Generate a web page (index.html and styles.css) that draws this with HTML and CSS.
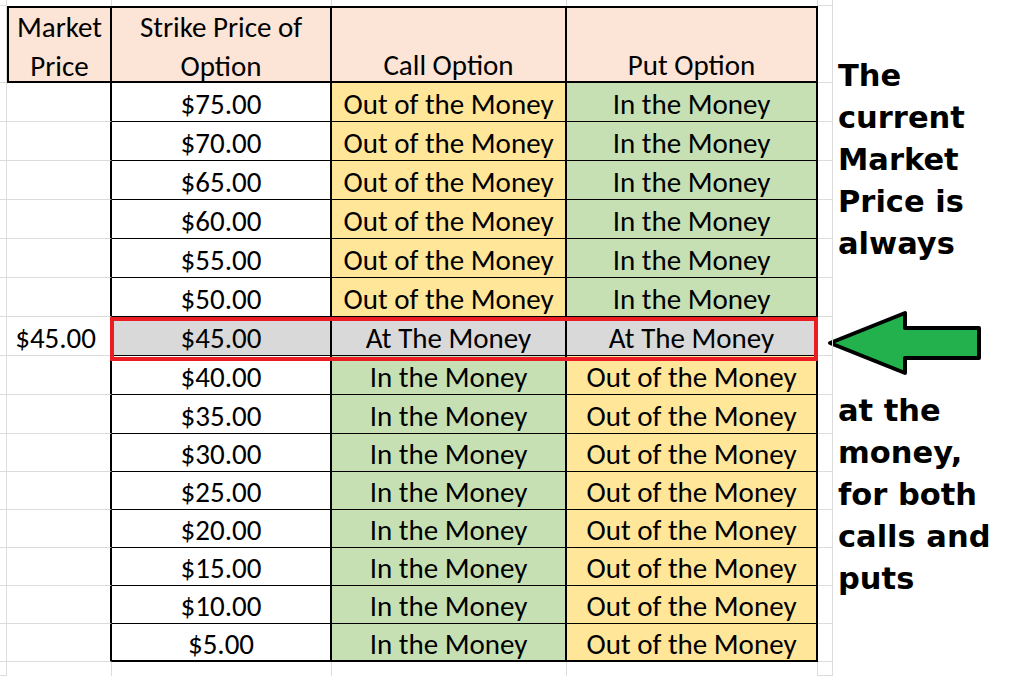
FILE: index.html
```html
<!DOCTYPE html>
<html>
<head>
<meta charset="utf-8">
<link rel="stylesheet" href="styles.css">
</head>
<body>
<div class="page">
  <div class="sheet">
    <div class="c side"></div><div class="c strip"></div><div class="c strip"></div><div class="c strip"></div><div class="c strip"></div><div class="c side"></div>
    <div class="c side"></div>
    <div class="c hd first">Market<br>Price</div>
    <div class="c hd">Strike Price of<br>Option</div>
    <div class="c hd single">Call Option</div>
    <div class="c hd single">Put Option</div>
    <div class="c side"></div>

    <div class="c side"></div><div class="c a"></div><div class="c t">$75.00</div><div class="c t y">Out of the Money</div><div class="c t g">In the Money</div><div class="c side"></div>
    <div class="c side"></div><div class="c a"></div><div class="c t">$70.00</div><div class="c t y">Out of the Money</div><div class="c t g">In the Money</div><div class="c side"></div>
    <div class="c side"></div><div class="c a"></div><div class="c t">$65.00</div><div class="c t y">Out of the Money</div><div class="c t g">In the Money</div><div class="c side"></div>
    <div class="c side"></div><div class="c a"></div><div class="c t">$60.00</div><div class="c t y">Out of the Money</div><div class="c t g">In the Money</div><div class="c side"></div>
    <div class="c side"></div><div class="c a"></div><div class="c t">$55.00</div><div class="c t y">Out of the Money</div><div class="c t g">In the Money</div><div class="c side"></div>
    <div class="c side"></div><div class="c a"></div><div class="c t">$50.00</div><div class="c t y">Out of the Money</div><div class="c t g">In the Money</div><div class="c side"></div>
    <div class="c side"></div><div class="c a mkt">$45.00</div><div class="c t at">$45.00</div><div class="c t at">At The Money</div><div class="c t at">At The Money</div><div class="c side"></div>
    <div class="c side"></div><div class="c a"></div><div class="c t">$40.00</div><div class="c t g">In the Money</div><div class="c t y">Out of the Money</div><div class="c side"></div>
    <div class="c side"></div><div class="c a"></div><div class="c t">$35.00</div><div class="c t g">In the Money</div><div class="c t y">Out of the Money</div><div class="c side"></div>
    <div class="c side"></div><div class="c a"></div><div class="c t">$30.00</div><div class="c t g">In the Money</div><div class="c t y">Out of the Money</div><div class="c side"></div>
    <div class="c side"></div><div class="c a"></div><div class="c t">$25.00</div><div class="c t g">In the Money</div><div class="c t y">Out of the Money</div><div class="c side"></div>
    <div class="c side"></div><div class="c a"></div><div class="c t">$20.00</div><div class="c t g">In the Money</div><div class="c t y">Out of the Money</div><div class="c side"></div>
    <div class="c side"></div><div class="c a"></div><div class="c t">$15.00</div><div class="c t g">In the Money</div><div class="c t y">Out of the Money</div><div class="c side"></div>
    <div class="c side"></div><div class="c a"></div><div class="c t">$10.00</div><div class="c t g">In the Money</div><div class="c t y">Out of the Money</div><div class="c side"></div>
    <div class="c side"></div><div class="c a"></div><div class="c t last">$5.00</div><div class="c t last g">In the Money</div><div class="c t last y">Out of the Money</div><div class="c side"></div>
    <div class="c side"></div><div class="c strip"></div><div class="c strip"></div><div class="c strip"></div><div class="c strip"></div><div class="c side"></div>

    <div class="highlight"></div>
  </div>

  <div class="notes">
    <p class="note">The<br>current<br>Market<br>Price is<br>always</p>
    <svg class="arrow" width="158" height="70" viewBox="0 0 158 70">
      <polygon points="4,34 79,4 79,19 153,19 153,49 79,49 79,64" fill="#22b14c" stroke="#000" stroke-width="4" stroke-linejoin="round"/>
    </svg>
    <p class="note second">at the<br>money,<br>for both<br>calls and<br>puts</p>
  </div>
</div>
</body>
</html>
```

FILE: styles.css
```css
body {
  margin: 0;
  background: #ffffff;
  font-family: Carlito, Lato, "Liberation Sans", sans-serif;
  color: #000;
}

.page {
  display: flex;
  align-items: flex-start;
}

.sheet {
  position: relative;
  display: grid;
  grid-template-columns: 7px 105px 220px 235px 251px 15px;
  grid-template-rows: 6px 77px repeat(9, 39px) repeat(6, 38px) 14px;
}

.c {
  box-sizing: border-box;
  border-right: 1px solid #dcdcdc;
  border-bottom: 1px solid #dcdcdc;
  display: flex;
  align-items: center;
  justify-content: center;
  font-size: 29px;
  line-height: 1;
  white-space: nowrap;
}

.strip {
  border-bottom: 0;
}

.hd {
  background: #fce4d6;
  border-top: 2px solid #000;
  border-bottom: 2px solid #000;
  border-right: 2px solid #000;
  align-items: flex-start;
  text-align: center;
  line-height: 39px;
  padding-top: 0;
  margin-top: 0;
}

.hd > * {
  margin: 0;
}

.hd.single {
  padding-top: 38px;
}

.hd.first {
  border-left: 2px solid #000;
}

.a {
  border-right: 2px solid #000;
  padding-top: 4px;
}

.mkt {
  justify-content: flex-end;
  padding-right: 14px;
}

.t {
  border-right: 2px solid #000;
  border-bottom: 1px solid #000;
  padding-top: 4px;
}

.t.last {
  border-bottom: 2px solid #000;
}

.y {
  background: #ffe699;
}

.g {
  background: #c6e0b4;
}

.at {
  background: #d9d9d9;
}

.highlight {
  position: absolute;
  left: 110px;
  top: 317px;
  width: 708px;
  height: 44px;
  box-sizing: border-box;
  border: 4px solid #ec1c24;
}

.notes {
  padding: 55px 0 0 5px;
  display: flex;
  flex-direction: column;
}

.note {
  margin: 0;
  font-family: "DejaVu Sans", Verdana, sans-serif;
  font-weight: bold;
  font-size: 30.5px;
  line-height: 42px;
  white-space: nowrap;
}

.arrow {
  display: block;
  margin: 44px 0 0 -12px;
}

.note.second {
  margin-top: 11px;
}
```
